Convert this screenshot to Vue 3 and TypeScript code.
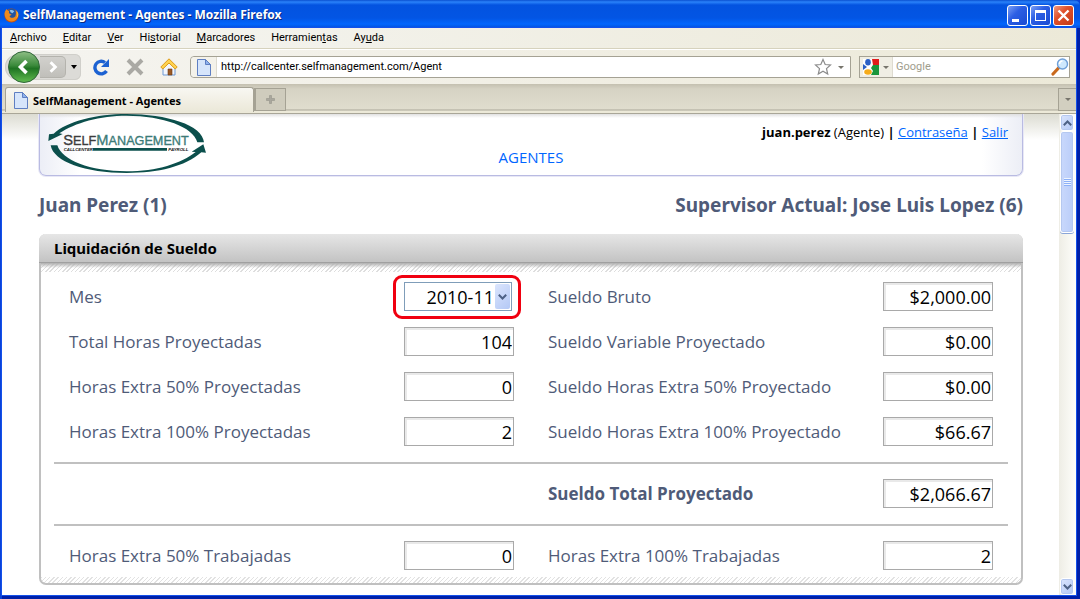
<script setup lang="ts">
import { ref } from 'vue'

interface MenuEntry { before: string; key: string; after: string }
interface Field { id: string; label: string; value: string; strong?: boolean }
type Pair = [Field | null, Field]

const menus: MenuEntry[] = [
  { before: '', key: 'A', after: 'rchivo' },
  { before: '', key: 'E', after: 'ditar' },
  { before: '', key: 'V', after: 'er' },
  { before: 'Hi', key: 's', after: 'torial' },
  { before: '', key: 'M', after: 'arcadores' },
  { before: 'Herramien', key: 't', after: 'as' },
  { before: 'Ay', key: 'u', after: 'da' },
]

const url = ref('http://callcenter.selfmanagement.com/Agent')
const search = ref('')
const month = ref('2010-11')
const months = ['2010-11', '2010-10', '2010-09']

const groups: Pair[][] = [
  [
    [{ id: 'mes', label: 'Mes', value: '' }, { id: 'bruto', label: 'Sueldo Bruto', value: '$2,000.00' }],
    [{ id: 'horas', label: 'Total Horas Proyectadas', value: '104' }, { id: 'variable', label: 'Sueldo Variable Proyectado', value: '$0.00' }],
    [{ id: 'extra50', label: 'Horas Extra 50% Proyectadas', value: '0' }, { id: 'sueldo50', label: 'Sueldo Horas Extra 50% Proyectado', value: '$0.00' }],
    [{ id: 'extra100', label: 'Horas Extra 100% Proyectadas', value: '2' }, { id: 'sueldo100', label: 'Sueldo Horas Extra 100% Proyectado', value: '$66.67' }],
  ],
  [[null, { id: 'total', label: 'Sueldo Total Proyectado', value: '$2,066.67', strong: true }]],
  [[{ id: 'trab50', label: 'Horas Extra 50% Trabajadas', value: '0' }, { id: 'trab100', label: 'Horas Extra 100% Trabajadas', value: '2' }]],
]
</script>

<template>
  <div class="window">
    <header class="titlebar">
      <svg class="fox" viewBox="0 0 16 16" aria-hidden="true">
        <circle cx="8" cy="8" r="7.500" fill="#c8500c" />
        <circle cx="8.500" cy="6" r="5.500" fill="#24549f" />
        <path d="M6 2.500c2-1 4 0 5 1l-2 2-2-1z" fill="#8dc0ee" />
        <path d="M1 4c1-2 1-2 2-3 0 1 1 2 3 2-1 1-1 2 0 3l2 1c0 1-2 1-2 2 1 2 4 2 6 0 1-2 1-5 0-7 3 2 4 6 2 9-3 5-10 4-12 0C1 9 0 6 1 4z" fill="#f08a1d" />
        <path d="M13 3c2 2 2 6 0 8 3-2 3-6 0-8z" fill="#ffd84a" />
      </svg>
      <h1>SelfManagement - Agentes - Mozilla Firefox</h1>
      <div class="winbtns">
        <button aria-label="Minimizar"><svg viewBox="0 0 21 21"><path d="M5 14h7v3H5z" fill="#fff" /></svg></button>
        <button aria-label="Maximizar"><svg viewBox="0 0 21 21"><path d="M5 5h11v11H5zM6 8v7h9V8z" fill="#fff" fill-rule="evenodd" /></svg></button>
        <button class="close" aria-label="Cerrar"><svg viewBox="0 0 21 21"><path d="M5.500 5.500l10 10M15.500 5.500l-10 10" stroke="#fff" stroke-width="2.400" /></svg></button>
      </div>
    </header>

    <div class="frame">
      <nav class="menubar">
        <button v-for="m in menus" :key="m.after">{{ m.before }}<u>{{ m.key }}</u>{{ m.after }}</button>
      </nav>

      <div class="toolbar">
        <div class="history">
          <button class="back" aria-label="Atrás">
            <svg viewBox="0 0 32 32">
              <defs>
                <linearGradient id="green" x1="0" y1="0" x2="0" y2="1">
                  <stop offset="0" stop-color="#8fbf86" /><stop offset=".45" stop-color="#3b8a3b" />
                  <stop offset=".55" stop-color="#1f7423" /><stop offset="1" stop-color="#62bd50" />
                </linearGradient>
              </defs>
              <circle cx="16" cy="16" r="15.500" fill="url(#green)" stroke="#31663a" />
              <path d="M18.500 10l-6 6 6 6" fill="none" stroke="#fff" stroke-width="3.600" />
            </svg>
          </button>
          <button class="forward" aria-label="Adelante">
            <svg viewBox="0 0 26 22"><path d="M11 6l5 5-5 5" fill="none" stroke="#fff" stroke-width="3" /></svg>
          </button>
          <button class="recent" aria-label="Historial reciente">
            <svg viewBox="0 0 8 4"><path d="M1 0h6L4 4z" fill="#000" /></svg>
          </button>
        </div>
        <button class="tool" aria-label="Recargar">
          <svg viewBox="0 0 18 18">
            <path d="M14.500 13A6.300 6.300 0 1 1 13 4.500" fill="none" stroke="#1c62d2" stroke-width="3.400" />
            <path d="M17 1v8H9z" fill="#1c62d2" />
          </svg>
        </button>
        <button class="tool" aria-label="Detener">
          <svg viewBox="0 0 18 18"><path d="M2 2l14 14M16 2L2 16" stroke="#aaa9a4" stroke-width="4" /></svg>
        </button>
        <button class="tool" aria-label="Inicio">
          <svg viewBox="0 0 18 18">
            <path d="M3 9v8h12V9L9 4z" fill="#f2f6fd" stroke="#6f9bd6" />
            <path d="M8 11h4v6H8z" fill="#9b5a25" stroke="#6b3b14" stroke-width=".6" />
            <path d="M9 .8L.8 9l2 2L9 5l6.200 6 2-2z" fill="#ffd34f" stroke="#dc9a1a" />
          </svg>
        </button>
        <div class="urlbox">
          <span class="site">
            <svg class="doc" viewBox="0 0 14 17"><path d="M.5.5h8l5 5v11H.5z" fill="#d6e5fb" stroke="#5f7fc2" /><path d="M8.500.5v5h5z" fill="#8fb3ee" stroke="#5f7fc2" /></svg>
          </span>
          <input v-model="url" type="text" aria-label="Dirección">
          <button class="star" aria-label="Marcador">
            <svg viewBox="0 0 18 18"><path d="M9 1.500l2.200 5 5.300.5-4 3.600 1.200 5.400L9 13.200 4.300 16l1.200-5.400-4-3.600 5.300-.5z" fill="#fff" stroke="#8b8b8b" stroke-width="1.200" /></svg>
          </button>
          <button class="drop" aria-label="Direcciones"><svg viewBox="0 0 6 3"><path d="M0 0h6L3 3z" fill="#77756c" /></svg></button>
        </div>
        <div class="searchbox">
          <button class="engine" aria-label="Buscador">
            <svg class="g" viewBox="0 0 16 16">
              <path d="M0 0h16v16H0z" fill="#fff" />
              <path d="M9 0h7v6h-6z" fill="#e11b1b" /><path d="M10 6h6v10H8l2-4-2-3z" fill="#1a963c" />
              <path d="M0 5l4 3-4 3z" fill="#2b5fc4" /><ellipse cx="5" cy="3.300" rx="2.800" ry="3.300" fill="#2b5fc4" />
              <ellipse cx="5" cy="13" rx="3.800" ry="2.800" fill="#f6ac1b" />
            </svg>
            <svg class="arrow" viewBox="0 0 6 3"><path d="M0 0h6L3 3z" fill="#77756c" /></svg>
          </button>
          <input v-model="search" type="text" placeholder="Google" aria-label="Buscar en Google">
          <button class="star" aria-label="Buscar">
            <svg viewBox="0 0 18 18">
              <path d="M8 9.500L2 16" stroke="#c9691d" stroke-width="3.200" stroke-linecap="round" />
              <circle cx="11.500" cy="6" r="5" fill="#cfe8fd" stroke="#6f9fd8" stroke-width="1.400" />
              <path d="M8.500 6a3 3 0 0 1 3-3" fill="none" stroke="#fff" stroke-width="1.500" />
            </svg>
          </button>
        </div>
      </div>

      <div class="tabs">
        <button class="tab">
          <svg class="doc" viewBox="0 0 14 17"><path d="M.5.5h8l5 5v11H.5z" fill="#d6e5fb" stroke="#5f7fc2" /><path d="M8.500.5v5h5z" fill="#8fb3ee" stroke="#5f7fc2" /></svg>
          SelfManagement - Agentes
        </button>
        <button class="newtab" aria-label="Nueva pestaña"><svg viewBox="0 0 9 9"><path d="M3.500.5h2v3h3v2h-3v3h-2v-3h-3v-2h3z" fill="#a9a79d" stroke="#96948a" stroke-width=".6" /></svg></button>
        <button class="alltabs" aria-label="Todas las pestañas"><svg viewBox="0 0 6 3"><path d="M0 0h6L3 3z" fill="#77756c" /></svg></button>
      </div>

      <div class="viewport">
        <main class="page">
          <section class="banner">
            <svg class="logo" viewBox="54 12 477 177" role="img" aria-label="SelfManagement">
              <g fill="#0b4f4c">
                <path d="M55 93L57 73 71 71C110 34 200 12 290 12 410 12 518 45 522 97H502C490 50 400 18 290 17 210 17 135 38 88 70L98 72z" />
                <path d="M62 106H82C95 150 180 184 290 184 380 184 455 160 497 126L485 125 520 103 528 128 514 127C465 170 385 189 290 189 165 189 70 155 62 106z" />
                <path d="M189 114H411V122H189z" />
              </g>
              <text x="100" y="105" class="word"><tspan class="big">S</tspan>ELF<tspan class="big teal">M</tspan><tspan class="teal">ANAGEMENT</tspan></text>
              <text x="101" y="123" class="tiny">CALLCENTER</text>
              <text x="415" y="123" class="tiny">PAYROLL</text>
            </svg>
            <p class="user"><b>juan.perez</b> (Agente) <b>|</b> <a href="#clave">Contraseña</a> <b>|</b> <a href="#salir">Salir</a></p>
            <p class="section">AGENTES</p>
          </section>

          <div class="people">
            <h2>Juan Perez (1)</h2>
            <h2>Supervisor Actual: Jose Luis Lopez (6)</h2>
          </div>

          <section class="panel">
            <h3>Liquidación de Sueldo</h3>
            <form class="fields" @submit.prevent>
              <div v-for="(group, g) in groups" :key="g" class="group">
                <div v-for="pair in group" :key="pair[1].id" class="row">
                  <div v-for="(f, i) in pair" :key="i" class="cell">
                    <template v-if="f">
                      <label :for="f.id" :class="{ strong: f.strong }">{{ f.label }}</label>
                      <span v-if="f.id === 'mes'" class="month">
                        <select :id="f.id" v-model="month">
                          <option v-for="m in months" :key="m">{{ m }}</option>
                        </select>
                        <span class="knob"><svg viewBox="0 0 9 6"><path d="M.8.8l3.700 3.700L8.200.8" fill="none" stroke="#4d6185" stroke-width="2" /></svg></span>
                        <span class="ring"></span>
                      </span>
                      <input v-else :id="f.id" type="text" readonly :value="f.value">
                    </template>
                  </div>
                </div>
              </div>
            </form>
          </section>
        </main>

        <div class="scroll">
          <button aria-label="Subir"><svg viewBox="0 0 9 6"><path d="M.8 5.200l3.700-3.700 3.700 3.700" fill="none" stroke="#4d6185" stroke-width="2" /></svg></button>
          <div class="thumb"><i></i></div>
          <button class="down" aria-label="Bajar"><svg viewBox="0 0 9 6"><path d="M.8.8l3.700 3.700L8.200.8" fill="none" stroke="#4d6185" stroke-width="2" /></svg></button>
        </div>
      </div>
    </div>
  </div>
</template>

<style>
body { margin: 0; background: #fff; }
</style>

<style scoped>
* { box-sizing: border-box; }
svg { display: block; }
button { border: 0; padding: 0; background: none; font: inherit; color: inherit; display: flex; align-items: center; justify-content: center; flex: none; }
input, select { font: inherit; border: 0; padding: 0; margin: 0; outline: 0; min-width: 0; }
h1, h2, h3, p { margin: 0; }

.window { height: 100vh; display: flex; flex-direction: column; background: #0a42d8; font-family: Roboto, "Open Sans", sans-serif; font-size: 11px; color: #000; overflow: hidden; }
.titlebar { flex: none; height: 28px; display: flex; align-items: center; gap: 4px; padding: 2px 6px 0 4px; border-radius: 0 6px 0 0; background: linear-gradient(#0a50d0, #2a82fa 2px, #0353e0 5px, #0355e4 18px, #0266fd 24px, #0350dc); }
.fox { width: 15px; height: 15px; }
h1 { flex: 1; font-family: "Noto Sans", "Open Sans", sans-serif; font-size: 12px; line-height: 20px; font-weight: 700; color: #fff; text-shadow: 1px 1px #0a2a80; }
.winbtns { display: flex; gap: 2px; }
.winbtns button { width: 21px; height: 21px; border: 1px solid #fff; border-radius: 3px; background: linear-gradient(135deg, #7b9ff5, #2d5fe4 40%, #1a4bd2); }
.winbtns .close { background: linear-gradient(135deg, #f09a80, #e0512c 40%, #c23a16); }
.winbtns svg { width: 21px; height: 21px; flex: none; }

.frame { flex: 1; min-height: 0; display: flex; flex-direction: column; margin: 0 4px 4px 2px; box-shadow: 0 0 0 1px #1350ea, 2px 2px 0 2px #0020a8; }
.menubar { flex: none; height: 21px; display: flex; align-items: center; gap: 16px; padding: 0 8px; background: linear-gradient(90deg, #f5f5f2, #ece9d8); border-bottom: 1px solid #d6d2bd; }
.menubar button { display: block; line-height: 16px; }
.menubar u { text-underline-offset: 1px; }

.toolbar { flex: none; height: 35px; display: flex; align-items: center; padding: 0 6px 0 3px; background: linear-gradient(90deg, #f5f4f0, #ece9d8); border-top: 1px solid #fff; }
.history { display: flex; align-items: center; height: 26px; width: 76px; border-radius: 13px 6px 6px 13px; background: #dcdbd7; margin-right: 11px; box-shadow: inset 0 0 0 1px #d0cfca; }
.back, .back svg { width: 32px; height: 32px; }
.back { margin-left: 3px; position: relative; z-index: 1; }
.forward { width: 26px; height: 22px; border: 1px solid #b4b3ad; border-left: 0; border-radius: 0 5px 5px 0; background: linear-gradient(#d2d1cd, #c0bfba); }
.forward svg { width: 26px; height: 22px; }
.recent { flex: 1; }
.recent svg { width: 8px; height: 4px; }
.tool { width: 18px; margin-right: 16px; }
.tool svg { width: 18px; height: 18px; }
.tool:nth-child(4) { margin-right: 12px; }
.urlbox, .searchbox { display: flex; align-items: center; height: 22px; background: #fff; border: 1px solid #a5a294; }
.urlbox { flex: 1; border-radius: 4px 0 0 4px; margin-right: 8px; }
.searchbox { width: 211px; }
.site { display: flex; align-items: center; justify-content: center; width: 26px; height: 20px; border-right: 1px solid #dedbd0; background: #f4f2ea; margin-right: 4px; border-radius: 4px 0 0 4px; }
.doc { width: 14px; height: 17px; flex: none; }
.urlbox input, .searchbox input { flex: 1; line-height: 18px; background: transparent; }
.searchbox input::placeholder { color: #a09d8c; opacity: 1; }
.star, .star svg { width: 18px; height: 18px; }
.drop { width: 18px; height: 20px; }
.drop svg, .arrow, .alltabs svg { width: 6px; height: 3px; }
.engine { width: 33px; height: 20px; gap: 4px; background: #f0eee4; border-right: 1px solid #dedbd0; margin-right: 3px; }
.g { width: 16px; height: 16px; }

.tabs { flex: none; height: 30px; display: flex; align-items: flex-start; padding: 3px 0 0 3px; background: linear-gradient(#c4c0b0, #d6d3c4 5px, #e0ddce 25px, #a9a698 26px, #ece9d8 27px, #ece9d8 29px, #a9a698 29px); }
.tab { width: 249px; height: 25px; justify-content: flex-start; gap: 5px; padding: 0 8px; font-family: "Noto Sans", "Open Sans", sans-serif; font-weight: 700; border: 1px solid #a5a294; border-bottom: 0; border-radius: 3px 3px 0 0; background: linear-gradient(#f8f7f2, #ebe8d8); }
.newtab { width: 32px; height: 23px; border: 1px solid #a5a294; border-left-width: 2px; background: #cfccbd; margin-top: 1px; }
.newtab svg { width: 9px; height: 9px; }
.alltabs { width: 18px; height: 23px; margin: 1px 0 0 auto; border: 1px solid #a5a294; border-right: 0; background: #d2cfc0; }

.viewport { flex: 1; min-height: 0; display: flex; background: #fff; }
.page { flex: 1; min-width: 0; overflow: hidden; padding: 0 36px 0 37px; color: #4f5b78; background: linear-gradient(#dcdcd2, #fff 26px); font-family: "Open Sans", "Noto Sans", sans-serif; }
.banner { position: relative; height: 62px; border: 1px solid #b9bbe2; border-top: 0; border-radius: 0 0 7px 7px; box-shadow: 0 0 0 1px #e8e8f6; background: linear-gradient(#e0e0e0, #fff0 4px), linear-gradient(90deg, #eceef6, #fff 40px, #fff calc(100% - 40px), #eceef6); }
.logo { position: absolute; left: 8px; top: 0; width: 159px; height: 59px; }
.word { font: 38px "Liberation Sans", Arial, sans-serif; fill: #3c3c3c; stroke: #3c3c3c; stroke-width: 1px; }
.big { font-size: 44px; }
.teal { fill: #3c7b78; stroke: #3c7b78; }
.tiny { font: italic bold 13px "Liberation Sans", Arial, sans-serif; fill: #111; }
.user { padding: 9px 14px 0 0; text-align: right; font-size: 13px; line-height: 18px; color: #000; }
.user a { color: #06f; }
.section { padding-top: 6px; text-align: center; font-size: 15px; line-height: 20px; color: #06f; }
.people { display: flex; justify-content: space-between; align-items: center; height: 58px; }
h2 { font-family: "Noto Sans", "Open Sans", sans-serif; font-size: 19px; line-height: 28px; font-weight: 700; }
.panel { border: 2px solid #c0c0c0; border-top: 0; border-radius: 7px; background: repeating-linear-gradient(135deg, #e2e2e2 0 1px, #fff 1px 3px) bottom / 100% 6px no-repeat, #fff; }
h3 { margin: 0 -2px; padding: 0 15px; border-radius: 7px 7px 0 0; font-family: "Noto Sans", "Open Sans", sans-serif; font-size: 15px; line-height: 28px; font-weight: 700; color: #000; background: linear-gradient(#e6e6e6, #c3c3c3); border-bottom: 1px solid #a0a0a0; }
.fields { padding: 11px 13px 5px; background: linear-gradient(#b0b0b0, #b0b0b000 5px), repeating-linear-gradient(135deg, #dedede 0 1px, #fff 1px 3px) top / 100% 9px no-repeat; font-size: 17px; }
.group + .group { border-top: 2px solid #c0c0c0; margin-top: 8px; padding-top: 7px; }
.row { display: flex; gap: 34px; padding: 0 15px; height: 45px; }
.cell { flex: 1; display: flex; align-items: center; justify-content: space-between; white-space: nowrap; }
.strong { font-weight: 700; }
.cell input, select { font-size: 18px; height: 29px; color: #000; background: #fff; text-align: right; }
.cell input { width: 110px; border: 1px solid #a9a9a9; box-shadow: inset 2px 2px #e9e9e9; padding-right: 1px; }
.month { position: relative; display: flex; width: 110px; }
select { appearance: none; width: 108px; border: 1px solid #7f9db9; border-radius: 0; padding-right: 17px; text-align-last: right; }
.knob { position: absolute; right: 4px; top: 2px; width: 15px; height: 25px; display: flex; align-items: center; justify-content: center; background: linear-gradient(135deg, #dbe5fd, #b3c8f5); border-radius: 2px; pointer-events: none; }
.knob svg, .scroll svg { width: 9px; height: 6px; }
.ring { position: absolute; inset: -7px -7px -8px -11px; border: 3px solid #f00010; border-radius: 9px; pointer-events: none; }

.scroll { flex: none; width: 17px; display: flex; flex-direction: column; background: linear-gradient(90deg, #eeede5, #fefefb); padding: 0 2px 0 1px; }
.scroll button { height: 17px; border: 1px solid #fff; border-radius: 3px; background: linear-gradient(135deg, #dbe5fd, #b3c8f5); box-shadow: inset 0 0 0 1px #b5c8f0; }
.thumb { height: 102px; border: 1px solid #fff; border-radius: 3px; background: linear-gradient(90deg, #c9d8fc, #bacdf9); box-shadow: inset 0 0 0 1px #b5c8f0, 0 1px #8aa5d8; display: flex; align-items: center; justify-content: center; }
.thumb i { width: 7px; height: 8px; background: repeating-linear-gradient(#eef4fe 0 1px, #8cb0f8 1px 2px); }
.scroll .down { margin-top: auto; }
</style>
